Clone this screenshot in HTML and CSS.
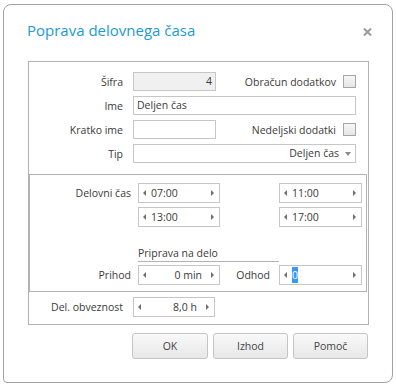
FILE: index.html
```html
<!DOCTYPE html>
<html lang="sl">
<head>
  <meta charset="UTF-8" />
  <title>Poprava delovnega časa</title>
  <link rel="stylesheet" href="styles.css">
</head>
<body>
  <div class="dialog">
    <header class="dlg-head">
      <h1 class="dlg-title">Poprava delovnega časa</h1>
      <span class="dlg-close" aria-label="Zapri">
        <svg width="9" height="8" viewBox="0 0 9 8"><path d="M1 0.5 L8 7.5 M8 0.5 L1 7.5" stroke="#9a9a9a" stroke-width="2" fill="none"/></svg>
      </span>
    </header>

    <div class="panel">
      <!-- osnovni podatki -->
      <div class="top-rows">
        <div class="row">
          <label class="lbl">Šifra</label>
          <div class="field short readonly num">4</div>
          <label class="lbl-check">Obračun dodatkov</label>
          <span class="check"></span>
        </div>
        <div class="row">
          <label class="lbl">Ime</label>
          <div class="field wide">Deljen čas</div>
        </div>
        <div class="row">
          <label class="lbl">Kratko ime</label>
          <div class="field short"></div>
          <label class="lbl-check">Nedeljski dodatki</label>
          <span class="check"></span>
        </div>
        <div class="row">
          <label class="lbl">Tip</label>
          <div class="field wide select">Deljen čas<span class="drop"></span></div>
        </div>
      </div>

      <!-- delovni čas -->
      <div class="section">
        <div class="srow">
          <label class="slbl">Delovni čas</label>
          <div class="spin"><span class="arr-l"></span><span class="val">07:00</span><span class="arr-r"></span></div>
          <span class="slbl2"></span>
          <div class="spin wide"><span class="arr-l"></span><span class="val">11:00</span><span class="arr-r"></span></div>
        </div>
        <div class="srow">
          <span class="slbl"></span>
          <div class="spin"><span class="arr-l"></span><span class="val">13:00</span><span class="arr-r"></span></div>
          <span class="slbl2"></span>
          <div class="spin wide"><span class="arr-l"></span><span class="val">17:00</span><span class="arr-r"></span></div>
        </div>
        <div class="group-title">Priprava na delo</div>
        <div class="srow tight">
          <label class="slbl">Prihod</label>
          <div class="spin"><span class="arr-l"></span><span class="val num">0 min</span><span class="arr-r"></span></div>
          <label class="slbl2">Odhod</label>
          <div class="spin wide"><span class="arr-l"></span><span class="val"><span class="sel">0</span></span><span class="arr-r"></span></div>
        </div>
      </div>

      <div class="row obv">
        <label class="lbl">Del. obveznost</label>
        <div class="spin"><span class="arr-l"></span><span class="val num">8,0 h</span><span class="arr-r"></span></div>
      </div>
    </div>

    <div class="buttons">
      <button class="btn ok">OK</button>
      <button class="btn">Izhod</button>
      <button class="btn">Pomoč</button>
    </div>
  </div>
</body>
</html>
```

FILE: styles.css
```css
* { box-sizing: border-box; margin: 0; padding: 0; }

body {
  background: #ffffff;
  font-family: "Open Sans", "Noto Sans", sans-serif;
  font-size: 10.5px;
  color: #3a3a3a;
}

.dialog {
  margin: 4px 0 0 3px;
  width: 390px;
  height: 379px;
  border: 1px solid #a2a2a2;
  border-radius: 8px 8px 8px 4px;
  background: #ffffff;
}

.dlg-head {
  display: flex;
  justify-content: space-between;
  height: 56px;
  padding: 15px 20px 0 23px;
}
.dlg-title {
  font-size: 15px;
  font-weight: 400;
  line-height: 20px;
  color: #1b9ad6;
}
.dlg-close { margin-top: 8px; height: 8px; }
.dlg-close svg { display: block; }

.panel {
  margin-left: 24px;
  width: 341px;
  height: 264px;
  border: 1px solid #b2b2b2;
}

.top-rows {
  display: flex;
  flex-direction: column;
  gap: 5px;
  padding: 10px 12px 0 0;
}

.row {
  display: flex;
  align-items: center;
  height: 19px;
}

.lbl {
  width: 94px;
  margin-right: 10px;
  text-align: right;
}

.field {
  height: 19px;
  border: 1px solid #c6c6c6;
  background: #fff;
  padding: 0 3px;
  line-height: 17px;
  white-space: nowrap;
}
.field.short { width: 83px; }
.field.wide { flex: 1; }
.field.readonly { background: #f0f0f0; }
.field.num { text-align: right; }
.field.select {
  display: flex;
  justify-content: flex-end;
  align-items: center;
  padding-right: 4px;
}
.drop {
  margin-left: 6px;
  border-left: 3px solid transparent;
  border-right: 3px solid transparent;
  border-top: 4px solid #8a8a8a;
}

.lbl-check {
  flex: 1;
  text-align: right;
  margin-right: 7px;
}
.check {
  width: 13px;
  height: 13px;
  border: 1px solid #a6a6a6;
  background: linear-gradient(#f6f6f6, #e6e6e6);
}

.section {
  margin-top: 11px;
  width: 338px;
  height: 118px;
  border: 1px solid #b2b2b2;
  padding-top: 8px;
}

.srow {
  display: flex;
  align-items: center;
  height: 20px;
  margin-bottom: 4px;
}
.srow.tight { margin: 3px 0 0; }

.slbl {
  width: 101px;
  margin-right: 7px;
  text-align: right;
}
.slbl2 {
  width: 50px;
  margin-right: 9px;
  text-align: right;
}

.spin {
  display: flex;
  align-items: center;
  width: 82px;
  height: 20px;
  border: 1px solid #c6c6c6;
  background: #fff;
  padding: 0 5px 0 4px;
}
.spin.wide { width: 83px; }
.spin .val {
  flex: 1;
  padding: 0 5px;
  white-space: nowrap;
}
.spin .val.num { text-align: right; padding-right: 9px; }

.arr-l, .arr-r {
  width: 0;
  height: 0;
  border-top: 3px solid transparent;
  border-bottom: 3px solid transparent;
}
.arr-l { border-right: 3px solid #6e6e6e; }
.arr-r { border-left: 3px solid #6e6e6e; }

.sel {
  background: #3399ff;
  color: #fff;
  padding: 1px 0;
}

.group-title {
  margin: 18px 0 0 108px;
  width: 141px;
  height: 17px;
  line-height: 16px;
  border-bottom: 1px solid #b2b2b2;
}

.row.obv { margin-top: 5px; }

.buttons {
  display: flex;
  justify-content: flex-end;
  gap: 5px;
  padding-right: 24px;
  margin-top: 8px;
}
.btn {
  width: 75px;
  height: 26px;
  border: 1px solid #c4c4c4;
  border-radius: 3px;
  background: linear-gradient(#f9f9f9, #e7e7e7);
  font-family: inherit;
  font-size: 10.5px;
  font-weight: 400;
  color: #444;
}
.btn.ok { width: 76px; }
```
